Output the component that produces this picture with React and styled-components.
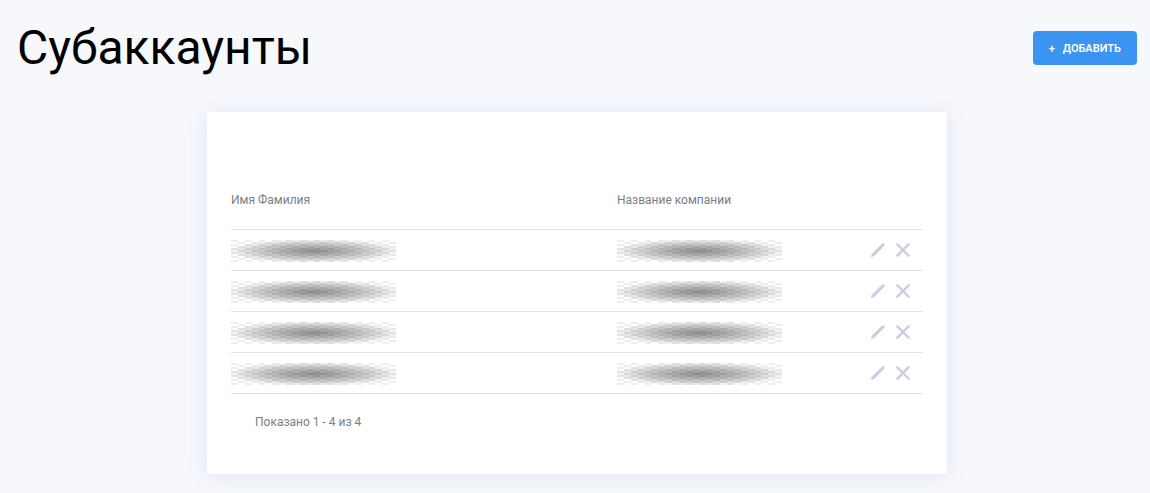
import React from 'react';
import styled, { createGlobalStyle } from 'styled-components';

const accounts = [1, 2, 3, 4];

const WEAVE_COLUMNS = 24;
const WEAVE_ROWS = 11;

const columnEdge = column => Math.round((column * 165) / WEAVE_COLUMNS);

// Every cell of the weave gets darker towards the middle, odd and even cells alternate.
const weave = Array.from({ length: WEAVE_COLUMNS * WEAVE_ROWS }, (_, index) => {
  const column = index % WEAVE_COLUMNS;
  const row = Math.floor(index / WEAVE_COLUMNS);
  const dx = (column + 0.5 - WEAVE_COLUMNS / 2) / (WEAVE_COLUMNS / 2);
  const dy = (row + 0.5 - WEAVE_ROWS / 2) / (WEAVE_ROWS / 2);
  const distance = Math.hypot(dx, dy);
  const shade = 0.58 * Math.max(0, 1.04 - distance) ** 0.8;
  const dash = (column + row) % 2 ? 0 : 0.09 - shade * 0.08;
  return { column, row, opacity: shade + dash };
});

const PencilIcon = () => (
  <svg width="16" height="16" viewBox="0 0 16 16" aria-hidden="true">
    <path
      fill="currentColor"
      d="M1 15l.6-3L11.7 1.9c.8-.8 1.7-1 2.5-.3.8.8.6 1.7-.2 2.5L4 14.2z"
    />
  </svg>
);

const CrossIcon = () => (
  <svg width="16" height="16" viewBox="0 0 16 16" aria-hidden="true">
    <path
      d="M2.5 2.5l11 11M13.5 2.5l-11 11"
      fill="none"
      stroke="currentColor"
      strokeWidth="2.3"
      strokeLinecap="square"
    />
  </svg>
);

const HiddenValue = () => (
  <Blotch width="165" height="24" viewBox="0 0 165 24" aria-hidden="true">
    {weave.map(({ column, row, opacity }) => (
      <rect
        key={`${column}-${row}`}
        x={columnEdge(column)}
        y={row * 2 + 2}
        width={columnEdge(column + 1) - columnEdge(column)}
        height="2"
        fill="#444"
        opacity={opacity}
      />
    ))}
  </Blotch>
);

const App = () => (
  <>
    <GlobalStyle />
    <Page>
      <Header>
        <Title>Субаккаунты</Title>
        <AddButton type="button">
          <span>+</span>
          <span>Добавить</span>
        </AddButton>
      </Header>
      <Card>
        <Table>
          <thead>
            <tr>
              <HeadCell scope="col" $width="386px">
                Имя Фамилия
              </HeadCell>
              <HeadCell scope="col">Название компании</HeadCell>
              <HeadCell as="td" $width="56px" />
            </tr>
          </thead>
          <tbody>
            {accounts.map(id => (
              <tr key={id}>
                <Cell>
                  <HiddenValue />
                </Cell>
                <Cell>
                  <HiddenValue />
                </Cell>
                <Cell>
                  <Actions>
                    <IconButton type="button" aria-label="Редактировать">
                      <PencilIcon />
                    </IconButton>
                    <IconButton type="button" aria-label="Удалить">
                      <CrossIcon />
                    </IconButton>
                  </Actions>
                </Cell>
              </tr>
            ))}
          </tbody>
        </Table>
        <Summary>Показано 1 - 4 из 4</Summary>
      </Card>
    </Page>
  </>
);

export default App;

const GlobalStyle = createGlobalStyle`
  body {
    margin: 0;
    background: #f7f8fc;
    color: #7c8084;
    font: 12px/16px Roboto, sans-serif;
  }
`;

const Page = styled.main`
  padding: 16px 13px 18px 17px;
`;

const Header = styled.header`
  display: flex;
  align-items: center;
  justify-content: space-between;
  margin-bottom: 32px;
`;

const Title = styled.h1`
  margin: 0;
  color: #000;
  font-size: 48px;
  font-weight: 400;
  line-height: 64px;
`;

const AddButton = styled.button`
  display: flex;
  align-items: center;
  gap: 8px;
  height: 34px;
  padding: 0 16px;
  border: 0;
  border-radius: 4px;
  background: #3c94f1;
  color: #fff;
  font-family: inherit;
  font-size: 11px;
  font-weight: 600;
  text-transform: uppercase;
  cursor: pointer;
`;

const Card = styled.section`
  box-sizing: border-box;
  max-width: 740px;
  margin: 0 auto;
  padding: 59px 24px 44px;
  border-radius: 3px;
  background: #fff;
  box-shadow: 0 2px 20px rgba(60, 110, 220, 0.14);
`;

const Table = styled.table`
  width: 100%;
  border-collapse: separate;
  border-spacing: 0;
  table-layout: fixed;
`;

const HeadCell = styled.th`
  box-sizing: border-box;
  width: ${props => props.$width || 'auto'};
  height: 59px;
  padding: 0;
  border-bottom: 1px solid #e2e3e5;
  font-weight: 400;
  text-align: left;
`;

const Cell = styled.td`
  box-sizing: border-box;
  height: 41px;
  padding: 0;
  border-bottom: 1px solid #e2e3e5;
  vertical-align: middle;
`;

const Blotch = styled.svg`
  display: block;
`;

const Actions = styled.div`
  display: flex;
  justify-content: flex-end;
  gap: 9px;
  padding-right: 12px;
`;

const IconButton = styled.button`
  display: flex;
  padding: 0;
  border: 0;
  background: none;
  color: #c9cde2;
  cursor: pointer;
`;

const Summary = styled.p`
  margin: 20px 24px 0;
`;
